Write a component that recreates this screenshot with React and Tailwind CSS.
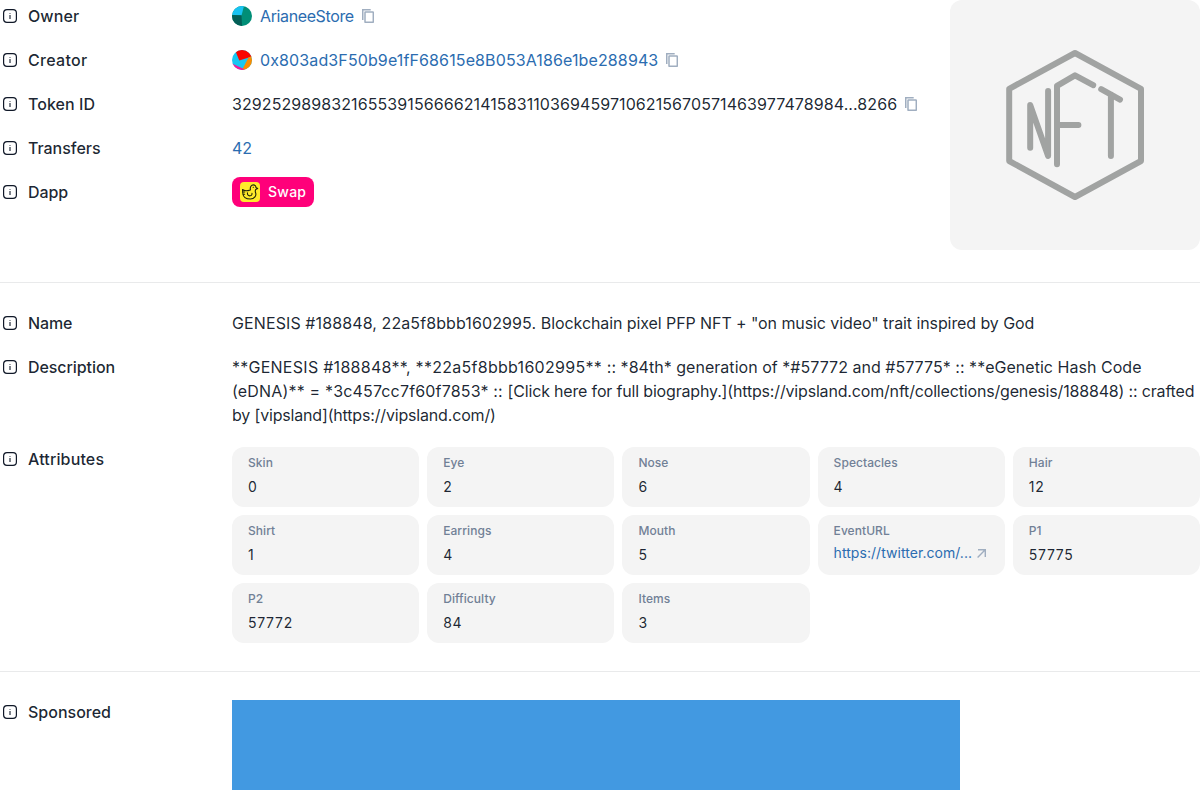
import React from "react";

function InfoIcon() {
  return (
    <svg className="mt-[5px] h-[14px] w-[14px] shrink-0" viewBox="0 0 14 14" fill="none">
      <rect x="0.6" y="0.6" width="12.8" height="12.8" rx="3.4" stroke="#101828" strokeWidth="1.2" />
      <path d="M7 6V10" stroke="#101828" strokeWidth="1.1" />
      <path d="M7 4V5" stroke="#101828" strokeOpacity="0.7" strokeWidth="1.1" />
    </svg>
  );
}

function CopyIcon() {
  return (
    <svg className="ml-2 h-[14px] w-3 shrink-0" viewBox="0 0 12 14" fill="none" stroke="#A0AEC0" strokeWidth="1.5">
      <path d="M0.75 11V0.75H8.7" />
      <rect x="3" y="3" width="8.3" height="10.3" rx="0.4" />
    </svg>
  );
}

function Row({ label, tracking = "", children }) {
  return (
    <div className="flex">
      <div className="flex w-[232px] shrink-0 pl-[3px]">
        <InfoIcon />
        <span className={`ml-[11px] font-medium ${tracking}`}>{label}</span>
      </div>
      <div className="min-w-0 flex-1">{children}</div>
    </div>
  );
}

function OwnerAvatar() {
  return (
    <svg className="mr-2 h-5 w-5 shrink-0 rounded-full" viewBox="0 0 20 20">
      <rect width="20" height="20" fill="#018E77" />
      <path d="M0 0H12L9.5 9.5L0 9Z" fill="#18C3F2" />
      <path d="M0 9L9.5 9.2L10 20H0Z" fill="#035E56" />
    </svg>
  );
}

function CreatorAvatar() {
  return (
    <svg className="mr-2 h-5 w-5 shrink-0 rounded-full" viewBox="0 0 20 20">
      <rect width="20" height="20" fill="#18C7F2" />
      <path d="M3 0H20V6.5L7.3 10.5Z" fill="#FA0500" />
      <path d="M16.5 7.5L20 6V20H10Z" fill="#F98C01" />
      <path d="M0 13.5L14 20H0Z" fill="#FB1896" />
    </svg>
  );
}

function DuckIcon() {
  return (
    <svg className="h-5 w-5 rounded" viewBox="0 0 20 20" fill="none" stroke="#20240A" strokeWidth="1.1" strokeLinecap="round" strokeLinejoin="round">
      <rect width="20" height="20" fill="#FFE92B" stroke="none" />
      <path d="M10.4 7.9C9.8 4.8 11.4 2.9 13.3 2.9C15 2.9 16 4.2 15.9 5.6L17.7 6.5L15.7 7.5C15.2 8.6 15 9.3 15.5 10.5C16.8 13.7 14.4 17 10.4 17C6.4 17 3.2 15 2.8 11.2L2.5 7.5C4.4 9.3 7.3 8.9 10.4 7.9Z" />
      <path d="M7.4 10.8C7.2 13 8.5 14 10 13.8C11.5 13.6 12.2 12.6 12 11.4M13.2 5.3H13.4M3 10H4.7M3.2 12.2H4.6" />
    </svg>
  );
}

function NftPlaceholder() {
  return (
    <div className="h-[250px] w-[250px] shrink-0 overflow-hidden rounded-xl bg-[#f4f4f4]">
      <svg className="h-full w-full" viewBox="0 0 250 250" fill="none" stroke="#A1A3A2" strokeWidth="6" strokeLinecap="round" strokeLinejoin="round">
        <path d="M125 53L191 88.8V161L125 197L59.2 161V88.8Z" />
        <path d="M80.2 147.8V105L98.1 156V91" />
        <path d="M107 164.3V85.8L125 75.3L143.2 85.2M107 125H128.4" />
        <path d="M151.2 89.2L170 99.6M160.9 94.5V156" />
      </svg>
    </div>
  );
}

const attributes = [
  ["Skin", "0"], ["Eye", "2"], ["Nose", "6"], ["Spectacles", "4"], ["Hair", "12"],
  ["Shirt", "1"], ["Earrings", "4"], ["Mouth", "5"], ["EventURL", "https://twitter.com/...", true], ["P1", "57775"],
  ["P2", "57772"], ["Difficulty", "84"], ["Items", "3"],
];

function Attribute({ name, value, link }) {
  return (
    <div className="h-[60px] rounded-xl bg-[#f4f4f4] px-4 pt-2">
      <div className="text-xs leading-4 font-medium tracking-[0.06px] text-[#718096]">{name}</div>
      {link ? (
        <div className="mt-1 flex items-center text-sm leading-5 tracking-[0.05px] whitespace-nowrap text-[#2b6cb0]">
          {value}
          <svg className="ml-[5px] h-[9px] w-[9px]" viewBox="0 0 9 9" fill="none" stroke="#A0AEC0" strokeWidth="1.4">
            <path d="M1 0.7H8.3V8M8.2 0.8L0.6 8.4" />
          </svg>
        </div>
      ) : (
        <div className="mt-1 text-sm leading-6 tracking-[0.7px]">{value}</div>
      )}
    </div>
  );
}

export default function App() {
  return (
    <main className="h-[794px] w-[1200px] overflow-hidden bg-white font-['Inter',sans-serif] text-base leading-6 text-[#101828]/95">
      <section className="flex h-[282px]">
        <div className="flex flex-1 flex-col gap-5 pt-1">
          <Row label="Owner" tracking="tracking-[0.1px]">
            <div className="flex items-center text-[#2b6cb0]"><OwnerAvatar /><span className="tracking-[-0.38px]">ArianeeStore</span><CopyIcon /></div>
          </Row>
          <Row label="Creator" tracking="tracking-[0.28px]">
            <div className="flex items-center text-[#2b6cb0]"><CreatorAvatar /><span className="tracking-[0.12px]">0x803ad3F50b9e1fF68615e8B053A186e1be288943</span><CopyIcon /></div>
          </Row>
          <Row label="Token ID" tracking="tracking-[0.05px]">
            <div className="flex items-center whitespace-nowrap"><span className="tracking-[0.085px]">32925298983216553915666621415831103694597106215670571463977478984...8266</span><CopyIcon /></div>
          </Row>
          <Row label="Transfers" tracking="tracking-[-0.04px]"><span className="text-[#2b6cb0]">42</span></Row>
          <Row label="Dapp" tracking="tracking-[-0.1px]">
            <button className="-my-[3px] flex h-[30px] w-[82px] items-center gap-2 rounded-lg bg-[#ff007a] pl-2 text-sm font-medium tracking-[0.25px] text-white">
              <DuckIcon />Swap
            </button>
          </Row>
        </div>
        <NftPlaceholder />
      </section>
      <section className="flex h-[389px] flex-col gap-5 border-t border-[#e9eaeb] pt-7">
        <Row label="Name" tracking="tracking-[-0.15px]">
          <span className="tracking-[0.1px]">GENESIS #188848, 22a5f8bbb1602995. </span>
          <span className="tracking-[-0.085px]">Blockchain pixel PFP NFT + "on music video" trait inspired by God</span>
        </Row>
        <Row label="Description" tracking="tracking-[-0.07px]">
          <p className="whitespace-nowrap">
            <span className="tracking-[0.28px]">**GENESIS #188848**, **22a5f8bbb1602995** </span>
            <span className="tracking-[0.03px]">:: *84th* generation of *#57772 and #57775* :: **eGenetic Hash Code</span>{" "}
            <br />
            <span className="tracking-[0.17px]">(eDNA)** = *3c457cc7f60f7853* :: </span>
            <span className="tracking-[-0.17px]">[Click here for full biography.](https://vipsland.com/nft/collections/genesis/188848) :: crafted</span>{" "}
            <br />
            <span className="tracking-[-0.17px]">by [vipsland](https://vipsland.com/)</span>
          </p>
        </Row>
        <Row label="Attributes" tracking="tracking-[0.15px]">
          <div className="grid grid-cols-5 gap-2">
            {attributes.map(([name, value, link]) => <Attribute key={name} name={name} value={value} link={link} />)}
          </div>
        </Row>
      </section>
      <section className="border-t border-[#e9eaeb] pt-7">
        <Row label="Sponsored"><div className="h-[90px] w-[728px] bg-[#4299e1]" /></Row>
      </section>
    </main>
  );
}
